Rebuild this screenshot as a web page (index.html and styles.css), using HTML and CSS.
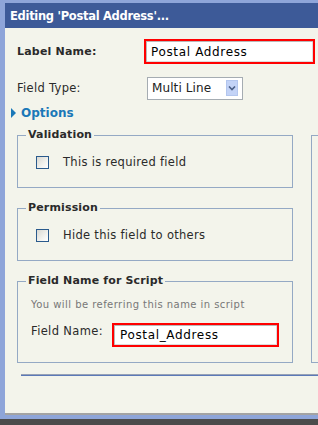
FILE: index.html
```html
<!DOCTYPE html>
<html>
<head>
<meta charset="utf-8">
<link rel="stylesheet" href="styles.css">
</head>
<body>
<div class="screen">
  <div class="window">
    <div class="titlebar">Editing 'Postal Address'...</div>
    <div class="content">
      <div class="row row-label">
        <span class="lbl lbl-bold">Label Name:</span>
        <input class="txt txt-label" type="text" value="Postal Address">
      </div>
      <div class="row row-type">
        <span class="lbl">Field Type:</span>
        <div class="select">
          <span class="select-val">Multi Line</span>
          <span class="select-btn">
            <svg width="8" height="5" viewBox="0 0 8 5"><path d="M1 0.5 L4 3.5 L7 0.5" fill="none" stroke="#4a5f86" stroke-width="1.6"/></svg>
          </span>
        </div>
      </div>
      <div class="options">
        <span class="tri"></span>
        <span class="options-text">Options</span>
      </div>
      <div class="panels">
        <div class="col-left">
          <fieldset class="box">
            <legend>Validation</legend>
            <div class="check-row"><span class="cb"></span><span>This is required field</span></div>
          </fieldset>
          <fieldset class="box">
            <legend>Permission</legend>
            <div class="check-row"><span class="cb"></span><span>Hide this field to others</span></div>
          </fieldset>
          <fieldset class="box box-script">
            <legend>Field Name for Script</legend>
            <div class="hint">You will be referring this name in script</div>
            <div class="fname-row">
              <span class="fname-lbl">Field Name:</span>
              <input class="txt txt-fname" type="text" value="Postal_Address">
            </div>
          </fieldset>
        </div>
        <div class="col-right"></div>
      </div>
      <div class="sep"></div>
    </div>
  </div>
  <div class="taskbar"></div>
</div>
</body>
</html>
```
FILE: styles.css
```css
* { box-sizing: border-box; }
html, body { margin: 0; padding: 0; }
body {
  font-family: "DejaVu Sans", Verdana, sans-serif;
  font-size: 11.5px;
  letter-spacing: 0.3px;
  color: #2a2a2a;
  background: #8ea5d9;
}
.screen {
  width: 318px;
  height: 425px;
  overflow: hidden;
  background: #8ea5d9;
  padding-top: 3px;
  display: flex;
  flex-direction: column;
}
.window {
  margin-left: 5px;
  width: 340px;
  height: 412px;
  flex: 0 0 auto;
  background: #f3f4eb;
  border-bottom: 2px solid #a3a3a3;
}
.titlebar {
  height: 25px;
  line-height: 26px;
  background: #3d5a98;
  color: #fff;
  font-weight: bold;
  font-size: 11.5px;
  letter-spacing: -0.3px;
  padding-left: 5px;
  white-space: nowrap;
}
.content {
  padding: 11px 0 0 12px;
}
.row {
  display: flex;
  align-items: center;
}
.row-label { height: 25px; }
.row-type { height: 22px; margin-top: 13px; }
.lbl {
  width: 127px;
  flex: 0 0 auto;
  font-size: 11.5px;
}
.lbl-bold { font-weight: bold; font-size: 11px; letter-spacing: 0.2px; }
.txt {
  font-family: "DejaVu Sans", Verdana, sans-serif;
  font-size: 12px;
  letter-spacing: 0.65px;
  color: #000;
  background: #fff;
  border: 2px solid #f00;
  box-shadow: inset 1px 1px 0 #b9b9b9, inset -1px -1px 0 #dcdcdc;
  margin: 0;
  outline: none;
}
.txt-label {
  width: 171px;
  height: 25px;
  padding: 0 0 0 5px;
}
.select {
  margin-left: 3px;
  width: 96px;
  height: 23px;
  background: #fff;
  border: 1px solid #a5acb2;
  display: flex;
  align-items: center;
  justify-content: space-between;
  padding: 0 4px 0 4px;
}
.select-val { font-size: 12px; color: #222; letter-spacing: 0.1px; }
.select-btn {
  width: 12px;
  height: 16px;
  background: #c3d3f7;
  border: 1px solid #b3c6ee;
  display: flex;
  align-items: center;
  justify-content: center;
}
.options {
  margin-top: 6px;
  margin-left: -6px;
  height: 16px;
  display: flex;
  align-items: center;
}
.tri {
  width: 0;
  height: 0;
  border-top: 5px solid transparent;
  border-bottom: 5px solid transparent;
  border-left: 5px solid #1a78b8;
  margin-right: 5px;
}
.options-text {
  color: #1a78b8;
  font-weight: bold;
  font-size: 12px;
  letter-spacing: 0;
}
.panels {
  margin-top: 6px;
  display: flex;
  align-items: flex-start;
}
.col-left {
  width: 276px;
  flex: 0 0 auto;
  display: flex;
  flex-direction: column;
  gap: 12px;
}
.col-right {
  margin-left: 18px;
  margin-top: 8px;
  width: 40px;
  height: 228px;
  border: 1px solid #94a9c4;
  flex: 0 0 auto;
}
.box {
  margin: 0;
  min-width: 0;
  border: 1px solid #94a9c4;
  padding: 11px 0 17px 8px;
}
.box legend {
  padding: 0 2px;
  font-weight: bold;
  font-size: 11px;
  letter-spacing: 0.15px;
  line-height: 16px;
  color: #2a2a2a;
}
.check-row {
  height: 16px;
  display: flex;
  align-items: center;
  margin-left: 10px;
}
.cb {
  width: 13px;
  height: 13px;
  border: 1px solid #2a5a8c;
  background: linear-gradient(135deg, #d8d8d2 0%, #f2f2ee 60%, #ffffff 100%);
  margin-right: 14px;
  flex: 0 0 auto;
}
.box-script { padding: 9px 0 15px 8px; }
.hint {
  margin-left: 5px;
  height: 14px;
  line-height: 14px;
  font-size: 10px;
  letter-spacing: 0.45px;
  color: #777;
  white-space: nowrap;
}
.fname-row {
  margin-top: 11px;
  margin-left: 5px;
  display: flex;
  align-items: flex-start;
}
.fname-lbl {
  width: 81px;
  flex: 0 0 auto;
  line-height: 16px;
  letter-spacing: 0.35px;
}
.txt-fname {
  width: 167px;
  height: 24px;
  padding: 0 0 0 6px;
}
.sep {
  margin-top: 11px;
  margin-left: 4px;
  height: 2px;
  border-top: 1px solid #96a1b6;
  border-bottom: 1px solid #5b79b8;
}
.taskbar {
  margin-top: 4px;
  height: 6px;
  background: #4b4b4b;
  flex: 0 0 auto;
}
```
